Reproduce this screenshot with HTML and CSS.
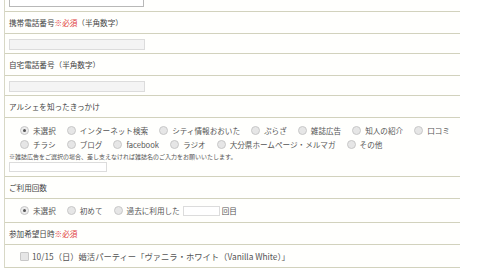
FILE: index.html
```html
<!DOCTYPE html>
<html lang="ja">
<head>
    <meta charset="UTF-8">
    <meta name="viewport" content="width=device-width, initial-scale=1.0">
    <title>お申し込みフォーム</title>
    <link rel="stylesheet" href="styles.css">
</head>
<body>
    <div class="form">
        <div class="row row-top">
            <span class="field field-top"></span>
        </div>

        <div class="row label">携帯電話番号<span class="req">※必須</span>（半角数字）</div>
        <div class="row row-input">
            <span class="field field-phone"></span>
        </div>

        <div class="row label">自宅電話番号（半角数字）</div>
        <div class="row row-input">
            <span class="field field-phone"></span>
        </div>

        <div class="row label">アルシェを知ったきっかけ</div>
        <div class="row row-choices">
            <div class="options">
                <label class="opt"><span class="radio checked"></span>未選択</label>
                <label class="opt"><span class="radio"></span>インターネット検索</label>
                <label class="opt"><span class="radio"></span>シティ情報おおいた</label>
                <label class="opt"><span class="radio"></span>ぷらざ</label>
                <label class="opt"><span class="radio"></span>雑誌広告</label>
                <label class="opt"><span class="radio"></span>知人の紹介</label>
                <label class="opt"><span class="radio"></span>口コミ</label>
            </div>
            <div class="options">
                <label class="opt"><span class="radio"></span>チラシ</label>
                <label class="opt"><span class="radio"></span>ブログ</label>
                <label class="opt"><span class="radio"></span>facebook</label>
                <label class="opt"><span class="radio"></span>ラジオ</label>
                <label class="opt"><span class="radio"></span>大分県ホームページ・メルマガ</label>
                <label class="opt"><span class="radio"></span>その他</label>
            </div>
            <p class="note">※雑誌広告をご選択の場合、差し支えなければ雑誌名のご入力をお願いいたします。</p>
            <span class="field field-magazine"></span>
        </div>

        <div class="row label">ご利用回数</div>
        <div class="row row-count">
            <label class="opt"><span class="radio checked"></span>未選択</label>
            <label class="opt"><span class="radio"></span>初めて</label>
            <label class="opt opt-times"><span class="radio"></span>過去に利用した<span class="field field-times"></span>回目</label>
        </div>

        <div class="row label">参加希望日時<span class="req">※必須</span></div>
        <div class="row row-check">
            <label class="opt opt-wide"><span class="checkbox"></span>10/15（日）婚活パーティー「ヴァニラ・ホワイト（Vanilla White）」</label>
        </div>
    </div>
</body>
</html>
```

FILE: styles.css
```css
* {
    margin: 0;
    padding: 0;
    box-sizing: border-box;
}
body {
    background: #fff;
    font-family: "Noto Sans CJK JP", "Noto Sans", sans-serif;
    color: #555;
    font-size: 7.6px;
    overflow: hidden;
}
.form {
    margin-left: 4px;
    width: 456px;
    border-left: 1px solid #d8d8c6;
    background: #fffffd;
}
.row {
    border-bottom: 1px solid #d2d2bd;
    padding-left: 4px;
}
.label {
    height: 22px;
    display: flex;
    align-items: center;
    color: #444;
}
.req {
    color: #e03c3c;
}
.field {
    display: block;
    border: 1px solid #dcdcdc;
    background: #f4f4f4;
}
.row-top {
    height: 12px;
    overflow: hidden;
    display: flex;
    align-items: flex-end;
    padding-bottom: 4px;
}
.field-top {
    width: 135px;
    height: 14px;
    background: #fff;
    border-color: #b8b8b8;
}
.row-input {
    height: 20px;
    padding-top: 5px;
}
.field-phone {
    width: 136px;
    height: 11px;
}
.row-choices {
    height: 59px;
    padding-top: 5px;
}
.options {
    display: flex;
    height: 14px;
    align-items: center;
    padding-left: 11px;
}
.opt {
    display: inline-flex;
    align-items: center;
    margin-right: 11px;
    white-space: nowrap;
}
.opt-wide {
    font-size: 8.3px;
}
.radio {
    width: 9px;
    height: 9px;
    border-radius: 50%;
    border: 1px solid #c8c8c8;
    background: #e6e6e6;
    margin-right: 4px;
    position: relative;
}
.radio.checked {
    background: #ececec;
}
.radio.checked::after {
    content: "";
    position: absolute;
    left: 2px;
    top: 2px;
    width: 3px;
    height: 3px;
    border-radius: 50%;
    background: #555;
}
.note {
    font-size: 6px;
    line-height: 8px;
    margin-top: 2px;
    color: #555;
}
.field-magazine {
    width: 98px;
    height: 10px;
    margin-top: 1px;
    background: #fff;
}
.row-count {
    height: 24px;
    display: flex;
    align-items: center;
    padding-left: 15px;
}
.field-times {
    display: inline-block;
    width: 37px;
    height: 10px;
    margin: 0 2px 0 3px;
    background: #fff;
}
.row-check {
    height: 23px;
    display: flex;
    align-items: center;
    padding-left: 15px;
}
.checkbox {
    width: 9px;
    height: 9px;
    border: 1px solid #c8c8c8;
    background: #e6e6e6;
    border-radius: 1px;
    margin-right: 3px;
}
```
